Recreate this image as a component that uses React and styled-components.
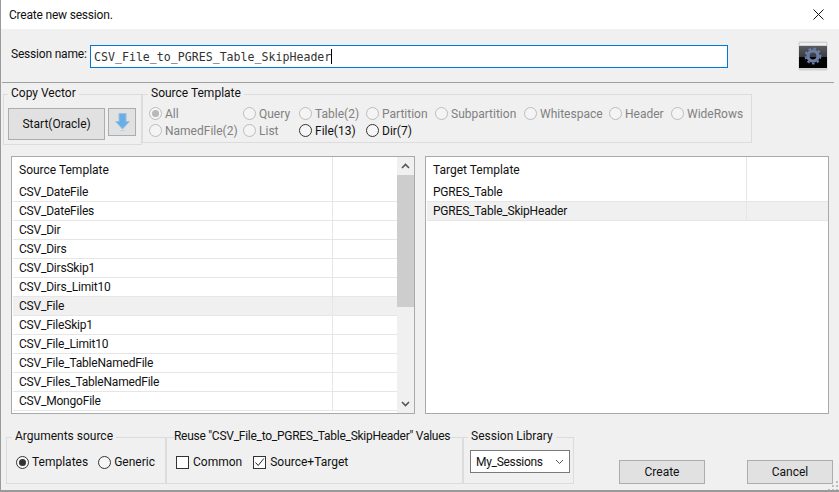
import React from "react";
import styled, { createGlobalStyle } from "styled-components";

const GlobalStyle = createGlobalStyle`
  html, body { margin: 0; padding: 0; background: #f0f0f0; }
  body { font-family: Roboto, "Open Sans", "Liberation Sans", sans-serif; font-size: 12px; color: #1a1a1a; }
  * { box-sizing: border-box; }
`;

const sourceRows = [
  "CSV_DateFile", "CSV_DateFiles", "CSV_Dir", "CSV_Dirs", "CSV_DirsSkip1", "CSV_Dirs_Limit10",
  "CSV_File", "CSV_FileSkip1", "CSV_File_Limit10", "CSV_File_TableNamedFile",
  "CSV_Files_TableNamedFile", "CSV_MongoFile",
];
const targetRows = ["PGRES_Table", "PGRES_Table_SkipHeader"];

const radios = [
  ["All", "disabled", true], ["Query", "disabled"], ["Table(2)", "disabled"], ["Partition", "disabled"],
  ["Subpartition", "disabled"], ["Whitespace", "disabled"], ["Header", "disabled"], ["WideRows", "disabled"],
  ["NamedFile(2)", "disabled"], ["List", "disabled"], ["File(13)", "active"], ["Dir(7)", "active"],
];

function Chevron({ up, color = "#555", weight = 1.6 }) {
  return (
    <svg width="9" height="6" viewBox="0 0 9 6">
      <path d={up ? "M1 5L4.5 1.5L8 5" : "M1 1L4.5 4.5L8 1"} fill="none" stroke={color} strokeWidth={weight} />
    </svg>
  );
}

function DataTable({ title, rows, selected, nameWidth, scroll }) {
  return (
    <Panel>
      <TableBody>
        <HeaderRow>
          <NameCell $width={nameWidth}>{title}</NameCell>
        </HeaderRow>
        {rows.map((r) => (
          <Row key={r} $selected={r === selected}>
            <NameCell $width={nameWidth}>{r}</NameCell>
          </Row>
        ))}
      </TableBody>
      {scroll && (
        <ScrollBar>
          <ScrollButton><Chevron up /></ScrollButton>
          <Thumb />
          <Track />
          <ScrollButton><Chevron /></ScrollButton>
        </ScrollBar>
      )}
    </Panel>
  );
}

function Radio({ label, kind, checked }) {
  return (
    <RadioLabel $kind={kind}>
      <RadioDot $kind={kind} $checked={checked} />
      {label}
    </RadioLabel>
  );
}

export default function App() {
  return (
    <Window>
      <GlobalStyle />
      <TitleBar>
        Create new session.
        <svg width="11" height="11" viewBox="0 0 11 11">
          <path d="M0.5 0.5L10.5 10.5M10.5 0.5L0.5 10.5" stroke="#111" strokeWidth="1" fill="none" />
        </svg>
      </TitleBar>
      <SessionRow>
        <SessionLabel>Session name:</SessionLabel>
        <NameInput>CSV_File_to_PGRES_Table_SkipHeader<Caret /></NameInput>
        <GearButton>
          <svg width="30" height="30" viewBox="0 0 30 30">
            <defs>
              <linearGradient id="gearBack" x1="0" y1="0" x2="0" y2="1">
                <stop offset="0" stopColor="#585c62" />
                <stop offset="0.5" stopColor="#3a3d42" />
                <stop offset="0.52" stopColor="#030303" />
                <stop offset="1" stopColor="#030303" />
              </linearGradient>
            </defs>
            <rect x="0.5" y="0.5" width="29" height="29" rx="1" fill="#d2d2d2" />
            <rect x="2" y="2" width="26" height="2" fill="#efefef" />
            <rect x="1" y="5" width="28" height="22" fill="url(#gearBack)" />
            <g fill="none" stroke="#6c7ea8">
              <circle cx="15" cy="15" r="5" strokeWidth="3.2" />
              <circle cx="15" cy="15" r="7.4" strokeWidth="2" strokeDasharray="2.6 2.4" />
            </g>
          </svg>
        </GearButton>
      </SessionRow>
      <Separator />
      <TemplateRow>
        <CopyGroup>
          <legend>Copy Vector</legend>
          <StartButton>Start(Oracle)</StartButton>
          <ArrowButton>
            <svg width="15" height="19" viewBox="0 0 15 19">
              <path d="M4 0.5H11V8.5H14.5L7.5 16L0.5 8.5H4Z" fill="#6aaee8" stroke="#9cc0de" />
              <path d="M5.5 17.5H9.5" stroke="#b4cfe6" />
            </svg>
          </ArrowButton>
        </CopyGroup>
        <SourceGroup>
          <legend>Source Template</legend>
          <RadioGrid>
            {radios.map(([label, kind, checked]) => (
              <Radio key={label} label={label} kind={kind} checked={checked} />
            ))}
          </RadioGrid>
        </SourceGroup>
      </TemplateRow>
      <TablesRow>
        <DataTable title="Source Template" rows={sourceRows} selected="CSV_File" nameWidth={320} scroll />
        <DataTable title="Target Template" rows={targetRows} selected="PGRES_Table_SkipHeader" nameWidth={320} />
      </TablesRow>
      <BottomRow>
        <ArgsGroup>
          <legend>Arguments source</legend>
          <Radio label="Templates" kind="active" checked />
          <Radio label="Generic" kind="active" />
        </ArgsGroup>
        <ReuseGroup>
          <legend>Reuse "CSV_File_to_PGRES_Table_SkipHeader" Values</legend>
          <CheckLabel><CheckBox />Common</CheckLabel>
          <CheckLabel>
            <CheckBox>
              <svg width="11" height="11" viewBox="0 0 11 11">
                <path d="M1.5 5.5L4.2 8.5L9.8 1.5" fill="none" stroke="#222" strokeWidth="1" />
              </svg>
            </CheckBox>
            Source+Target
          </CheckLabel>
        </ReuseGroup>
        <LibraryGroup>
          <legend>Session Library</legend>
          <Combo>
            <ComboText>My_Sessions</ComboText>
            <Chevron color="#555" weight={1} />
          </Combo>
        </LibraryGroup>
        <Actions>
          <ActionButton>Create</ActionButton>
          <ActionButton>Cancel</ActionButton>
        </Actions>
      </BottomRow>
      <Grip>
        <svg width="12" height="12" viewBox="0 0 12 12" fill="#bdbdbd">
          <rect x="9" y="1" width="2" height="2" />
          <rect x="5" y="5" width="2" height="2" />
          <rect x="9" y="5" width="2" height="2" />
          <rect x="1" y="9" width="2" height="2" />
          <rect x="5" y="9" width="2" height="2" />
          <rect x="9" y="9" width="2" height="2" />
        </svg>
      </Grip>
    </Window>
  );
}

const Window = styled.div`
  position: relative;
  width: 839px;
  height: 492px;
  background: #f0f0f0;
  border-left: 1px solid #9a9a9a;
  border-bottom: 2px solid #9a9a9a;
  overflow: hidden;
  display: flex;
  flex-direction: column;
`;

const TitleBar = styled.div`
  height: 29px;
  background: #fff;
  display: flex;
  align-items: center;
  justify-content: space-between;
  padding: 0 15px 0 8px;
  font-size: 12px;
  letter-spacing: -0.2px;
  color: #111;
`;

const SessionRow = styled.div`
  height: 53px;
  display: flex;
  align-items: center;
  padding: 0 11px 0 10px;
`;

const SessionLabel = styled.span`
  width: 79px;
  margin-top: -3px;
  color: #111;
  letter-spacing: -0.2px;
  white-space: nowrap;
`;

const NameInput = styled.div`
  width: 638px;
  height: 23px;
  margin-top: 2px;
  background: #fff;
  border: 1px solid #0078d7;
  padding: 0 3px;
  display: flex;
  align-items: center;
  font-family: "DejaVu Sans Mono", "Liberation Mono", monospace;
  font-size: 11.6px;
  color: #333;
`;

const Caret = styled.span`
  width: 1px;
  height: 15px;
  background: #000;
`;

const GearButton = styled.div`
  margin-left: auto;
  width: 30px;
  height: 30px;
  margin-top: 1px;
  svg { display: block; filter: blur(0.5px); }
`;

const Separator = styled.div`
  height: 1px;
  background: #a0a0a0;
  margin: 0 5px 0 1px;
`;

const Group = styled.fieldset`
  margin: 0;
  min-width: 0;
  border: 1px solid #dcdcdc;
  legend {
    padding: 0 3px 2px;
    line-height: 14px;
    font-size: 12px;
    color: #111;
    white-space: nowrap;
  }
`;

const TemplateRow = styled.div`
  display: flex;
  margin: 3px 0 0 2px;
`;

const CopyGroup = styled(Group)`
  width: 139px;
  height: 59px;
  padding: 6px 5px 0 4px;
  display: flex;
  align-items: flex-start;
  gap: 3px;
  legend { margin-left: 0; }
`;

const Raised = styled.div`
  display: flex;
  align-items: center;
  justify-content: center;
  background: #e1e1e1;
  border: 1px solid #adadad;
  color: #111;
`;

const StartButton = styled(Raised)`
  width: 98px;
  height: 32px;
`;

const ArrowButton = styled(Raised)`
  width: 28px;
  height: 28px;
`;

const SourceGroup = styled(Group)`
  width: 610px;
  height: 57px;
  padding: 3px 0 0 6px;
  legend { margin-left: -1px; }
`;

const RadioGrid = styled.div`
  display: grid;
  grid-template-columns: 94px 56px 67px 69px 89px 85px 62px auto;
  grid-auto-rows: 17px;
`;

const RadioLabel = styled.label`
  display: flex;
  align-items: center;
  gap: 3px;
  white-space: nowrap;
  color: ${(p) => (p.$kind === "disabled" ? "#808080" : "#111")};
`;

const RadioDot = styled.span`
  width: 13px;
  height: 13px;
  border-radius: 50%;
  flex: none;
  display: flex;
  align-items: center;
  justify-content: center;
  background: ${(p) => (p.$kind === "disabled" ? "#f4f4f4" : "#f6f6f6")};
  border: 1px solid ${(p) => (p.$kind === "disabled" ? "#bcbcbc" : "#333")};
  &::after {
    content: "";
    display: ${(p) => (p.$checked ? "block" : "none")};
    width: 7px;
    height: 7px;
    border-radius: 50%;
    background: ${(p) => (p.$kind === "disabled" ? "#b8b8b8" : "#333")};
  }
`;

const TablesRow = styled.div`
  display: flex;
  gap: 10px;
  margin: 11px 0 0 10px;
`;

const Panel = styled.div`
  width: 404px;
  height: 258px;
  background: #fff;
  border: 1px solid #a9a9a9;
  display: flex;
  overflow: hidden;
`;

const TableBody = styled.div`
  flex: 1;
  min-width: 0;
  padding-left: 1px;
`;

const NameCell = styled.div`
  width: ${(p) => p.$width}px;
  height: 100%;
  padding-left: 6px;
  border-right: 1px solid #e6e6e6;
  display: flex;
  align-items: center;
  white-space: nowrap;
  color: #111;
`;

const HeaderRow = styled.div`
  height: 26px;
`;

const Row = styled.div`
  height: 19px;
  border-bottom: 1px solid #e6e6e6;
  letter-spacing: -0.2px;
  background: ${(p) => (p.$selected ? "#f0f0f0" : "#fff")};
`;

const ScrollBar = styled.div`
  width: 17px;
  flex: none;
  background: #f0f0f0;
  display: flex;
  flex-direction: column;
`;

const ScrollButton = styled.div`
  height: 18px;
  display: flex;
  align-items: center;
  justify-content: center;
`;

const Thumb = styled.div`
  height: 132px;
  background: #cdcdcd;
`;

const Track = styled.div`
  flex: 1;
`;

const BottomRow = styled.div`
  display: flex;
  margin: 15px 0 0 5px;
`;

const ArgsGroup = styled(Group)`
  width: 160px;
  height: 55px;
  padding: 10px 0 0 9px;
  display: flex;
  gap: 10px;
  align-items: flex-start;
  legend { margin-left: -4px; }
`;

const ReuseGroup = styled(Group)`
  width: 297px;
  height: 55px;
  padding: 10px 0 0 9px;
  display: flex;
  gap: 11px;
  align-items: flex-start;
  legend { margin-left: -2px; padding: 0 0 2px 0; letter-spacing: -0.27px; }
`;

const CheckLabel = styled.label`
  display: flex;
  align-items: center;
  gap: 4px;
  color: #111;
`;

const CheckBox = styled.span`
  width: 13px;
  height: 13px;
  background: #fff;
  border: 1px solid #333;
  display: flex;
  align-items: center;
  justify-content: center;
`;

const LibraryGroup = styled(Group)`
  width: 111px;
  height: 55px;
  padding: 5px 0 0 5px;
  legend { margin-left: -1px; }
`;

const Combo = styled.div`
  width: 100px;
  height: 23px;
  margin-left: 1px;
  background: #fff;
  border: 1px solid #7a7a7a;
  display: flex;
  align-items: center;
  justify-content: space-between;
  padding: 0 5px;
  color: #111;
`;

const ComboText = styled.span`
  letter-spacing: -0.3px;
`;

const Actions = styled.div`
  display: flex;
  gap: 42px;
  margin: 31px 0 0 45px;
`;

const ActionButton = styled(Raised)`
  width: 86px;
  height: 24px;
`;

const Grip = styled.div`
  position: absolute;
  right: 0;
  bottom: -2px;
  line-height: 0;
`;
